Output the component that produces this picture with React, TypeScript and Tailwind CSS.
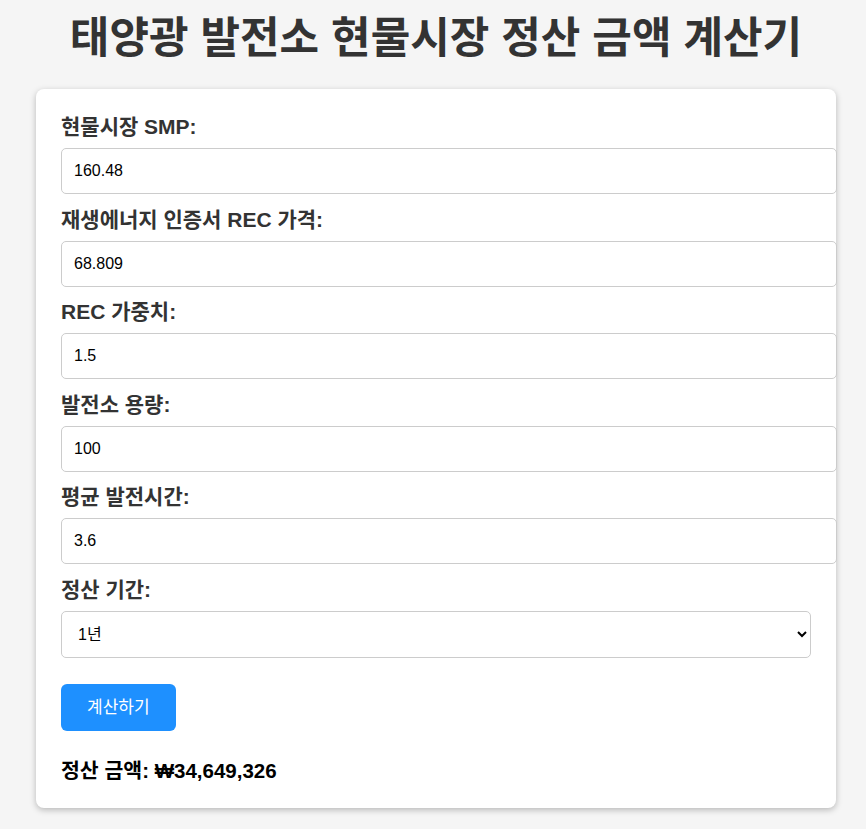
import React, { useState } from "react";

const font = { fontFamily: '"Liberation Sans", "Noto Sans CJK KR", sans-serif' };

export default function App() {
  const [smp, setSmp] = useState("160.48");
  const [rec, setRec] = useState("68.809");
  const [w, setW] = useState("1.5");
  const [cap, setCap] = useState("100");
  const [hrs, setHrs] = useState("3.6");
  const [period, setPeriod] = useState("1");

  const fields: [string, string, (v: string) => void][] = [
    ["현물시장 SMP:", smp, setSmp],
    ["재생에너지 인증서 REC 가격:", rec, setRec],
    ["REC 가중치:", w, setW],
    ["발전소 용량:", cap, setCap],
    ["평균 발전시간:", hrs, setHrs],
  ];

  return (
    <div className="min-h-[829px] bg-[#f5f5f5] pt-[8px] flex flex-col" style={font}>
      <h1 className="text-[43px] leading-[60px] font-bold text-[#333] mb-[21px] text-center pl-[6px]">
        태양광 발전소 현물시장 정산 금액 계산기
      </h1>
      <div className="ml-[36px] w-[800px] bg-white rounded-[8px] shadow-[0_2px_6px_rgba(0,0,0,0.25)] pt-[25px] pb-[24px] px-[25px]">
        {fields.map(([label, val, set]) => (
          <div key={label}>
            <label className="block text-[21px] leading-[26px] font-bold text-[#333] mb-[8px]">
              {label}
            </label>
            <input
              type="text"
              value={val}
              onChange={(e) => set(e.target.value)}
              className="block w-[776px] h-[46px] px-[12px] py-[12px] border border-[#ccc] rounded-[5px] text-[16px] leading-[20px] text-black mb-[12.6px] outline-none"
            />
          </div>
        ))}
        <label className="block text-[21px] leading-[26px] font-bold text-[#333] mb-[8px]">
          정산 기간:
        </label>
        <select
          value={period}
          onChange={(e) => setPeriod(e.target.value)}
          className="block w-full h-[47px] px-[12px] border border-[#ccc] rounded-[5px] text-[16px] text-black bg-white"
        >
          <option value="1">1년</option>
          <option value="2">2년</option>
          <option value="3">3년</option>
        </select>
        <button className="mt-[26px] h-[47px] px-[26px] bg-[#1e90ff] text-white text-[17px] rounded-[6px]">
          계산하기
        </button>
        <p className="mt-[27px] text-[20.5px] leading-[26px] font-bold text-black">
          정산 금액: ₩34,649,326
        </p>
      </div>
    </div>
  );
}
